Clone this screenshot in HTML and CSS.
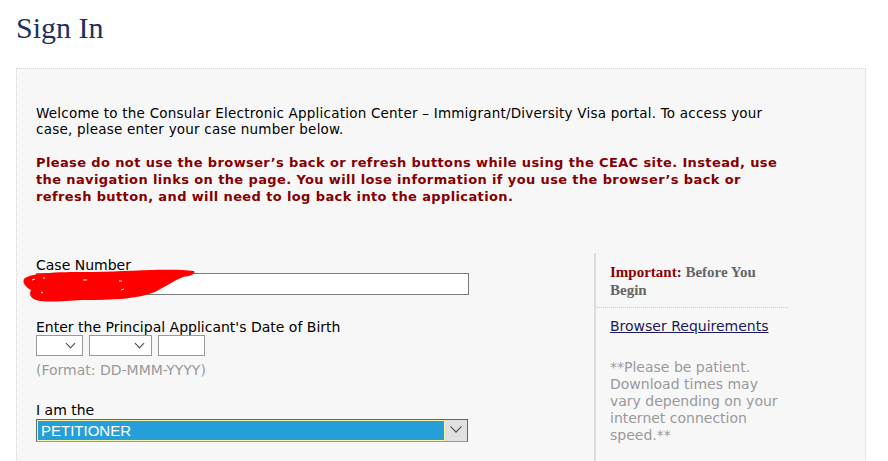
FILE: index.html
```html
<!DOCTYPE html>
<html>
<head>
<meta charset="utf-8">
<link rel="stylesheet" href="styles.css">
</head>
<body>
<h1 class="title">Sign In</h1>
<div class="panel">
  <p class="intro">Welcome to the Consular Electronic Application Center – Immigrant/Diversity Visa portal. To access your case, please enter your case number below.</p>
  <p class="warn">Please do not use the browser’s back or refresh buttons while using the CEAC site. Instead, use the navigation links on the page. You will lose information if you use the browser’s back or refresh button, and will need to log back into the application.</p>
  <div class="cols">
    <div class="form">
      <div class="field">
        <label class="lbl">Case Number</label>
        <div class="case-wrap">
          <input class="text case" type="text">
          <svg class="scribble" width="174" height="34" viewBox="0 0 174 34"><path d="M1 10 C8 3 40 3 70 3 C110 2 150 -1 171 2 C173 5 168 7 160 8 C150 12 142 18 132 23 C115 30 90 31 60 31 C40 32 22 34 13 31 C7 29 6 25 8 21 C3 18 -1 14 1 10 Z" fill="#ff0000"/><path d="M9 11 l3 -1 M20 9 l2 0 M60 11 l4 0 M96 12 l3 0 M98 21 l3 -1 M18 23 l2 1" stroke="#fff" stroke-width="1" fill="none"/></svg>
        </div>
      </div>
      <div class="field">
        <label class="lbl">Enter the Principal Applicant's Date of Birth</label>
        <div class="dob">
          <div class="sel s1"><span class="chev"></span></div>
          <div class="sel s2"><span class="chev"></span></div>
          <div class="sel s3"></div>
        </div>
        <div class="hint">(Format: DD-MMM-YYYY)</div>
      </div>
      <div class="field">
        <label class="lbl">I am the</label>
        <div class="role">
          <div class="role-val">PETITIONER</div>
          <div class="role-btn"><span class="chev"></span></div>
        </div>
      </div>
    </div>
    <div class="side">
      <div class="imp"><span class="red">Important:</span> Before You Begin</div>
      <div class="sep"></div>
      <a class="link" href="#">Browser Requirements</a>
      <p class="note">**Please be patient. Download times may vary depending on your internet connection speed.**</p>
    </div>
  </div>
</div>
</body>
</html>
```
FILE: styles.css
```css
html, body { margin: 0; padding: 0; background: #fff; }
body { padding: 0 22px 0 16px; font-family: "DejaVu Sans", Verdana, sans-serif; }
.title { margin: 0; padding-top: 11px; height: 68px; box-sizing: border-box; font-family: "Liberation Serif", serif; font-weight: normal; font-size: 30px; line-height: 34px; color: #1f2f5f; }
.panel { border: 1px dotted #ddd6c4; background: #f7f7f7; padding: 36px 20px 20px 19px; min-height: 420px; }
.intro { margin: 0; font-size: 13.5px; line-height: 16px; letter-spacing: 0.22px; color: #000; max-width: 740px; }
.warn { margin: 17px 0 0; font-size: 13px; line-height: 17px; letter-spacing: 0.38px; font-weight: bold; color: #850000; max-width: 750px; }
.cols { display: flex; margin-top: 48px; }
.form { width: 558px; padding-top: 5px; }
.field { margin-bottom: 25px; }
.lbl { display: block; font-size: 14px; line-height: 15px; color: #000; }
.case-wrap { position: relative; }
.text.case { display: block; width: 433px; height: 22px; box-sizing: border-box; border: 1px solid #7a7a7a; background: #fff; margin: 0; padding: 0; }
.scribble { position: absolute; left: -13px; top: -4px; }
.dob { display: flex; gap: 6px; }
.sel { height: 21px; box-sizing: border-box; border: 1px solid #999; background: #fff; position: relative; }
.s1 { width: 47px; }
.s2 { width: 63px; }
.s3 { width: 47px; }
.chev { position: absolute; right: 8px; top: 4px; width: 6px; height: 6px; border-right: 1px solid #444; border-bottom: 1px solid #444; transform: rotate(45deg); }
.hint { font-size: 14px; line-height: 16px; color: #999; margin-top: 6px; }
.role { display: flex; width: 432px; height: 23px; box-sizing: border-box; border: 1px solid #666; border-bottom-color: #999; background: #e0e0e0; margin-top: 1px; }
.role-val { flex: 1; background: #269fd9; border: 1px solid #f7f3a8; color: #fff; font-family: "Liberation Sans", Arial, sans-serif; font-size: 15px; line-height: 19px; padding-left: 3px; }
.role-btn { width: 22px; position: relative; }
.role-btn .chev { right: 7px; top: 3px; width: 7px; height: 7px; }
.side { width: 192px; border-left: 2px solid #ddd; padding-top: 10px; height: 198px; }
.imp { font-family: "Liberation Serif", serif; font-weight: bold; font-size: 15px; line-height: 18px; color: #666; padding-left: 14px; width: 165px; }
.red { color: #8b0000; }
.sep { border-top: 1px dotted #ccc; margin: 8px 0 10px; }
.link { display: block; padding-left: 14px; font-size: 14px; line-height: 16px; color: #1a1a5a; }
.note { margin: 25px 0 0; padding-left: 14px; font-size: 14px; line-height: 17px; color: #999; width: 172px; }
```
